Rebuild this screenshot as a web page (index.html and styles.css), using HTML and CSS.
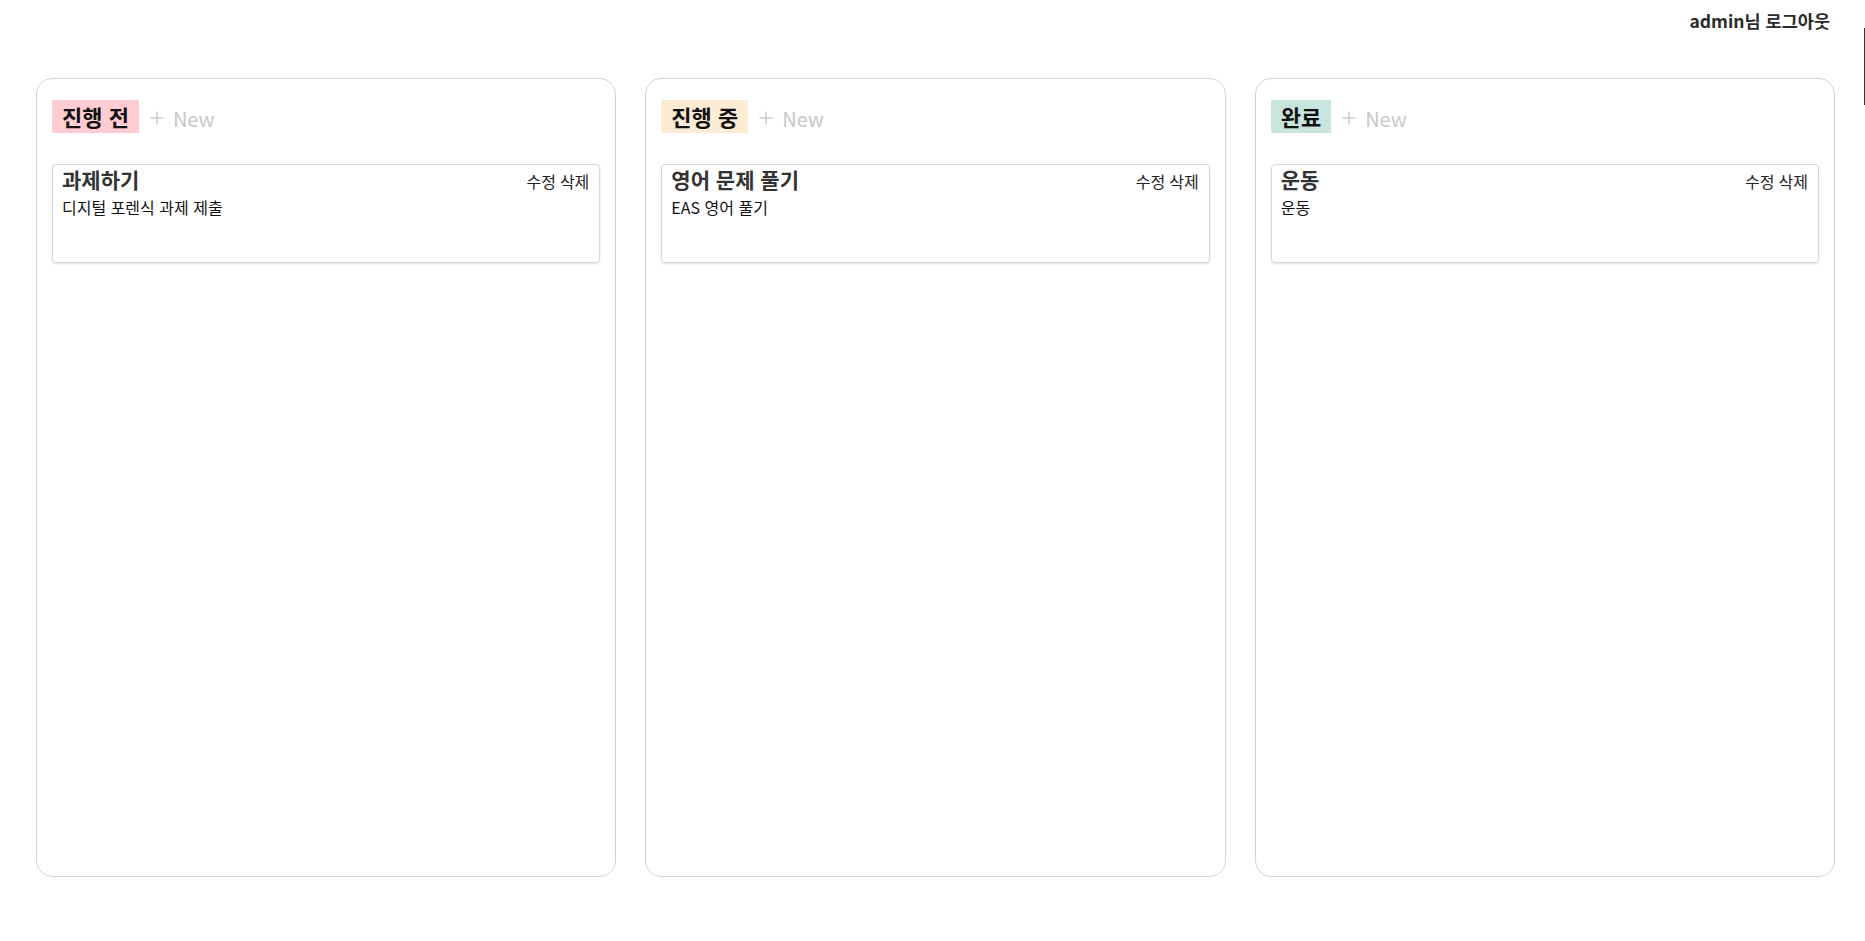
FILE: index.html
```html
<!DOCTYPE html>
<html lang="ko">
<head>
<meta charset="utf-8">
<title>Board</title>
<link rel="stylesheet" href="styles.css">
</head>
<body>
<header class="topbar">
  <span class="user">admin님</span>
  <a class="logout">로그아웃</a>
</header>
<div class="edge-line"></div>
<main class="board">
  <section class="column">
    <div class="column-head">
      <span class="badge badge-todo">진행 전</span>
      <button class="new-btn"><svg class="plus" viewBox="0 0 14 14" width="14" height="14"><path d="M7 0.5V13.5M0.5 7H13.5" stroke="#c8c8c8" stroke-width="1.4" fill="none"/></svg>New</button>
    </div>
    <article class="card">
      <div class="card-top">
        <h3 class="card-title">과제하기</h3>
        <div class="card-actions"><button class="act">수정</button><button class="act">삭제</button></div>
      </div>
      <p class="card-desc">디지털 포렌식 과제 제출</p>
    </article>
  </section>
  <section class="column">
    <div class="column-head">
      <span class="badge badge-doing">진행 중</span>
      <button class="new-btn"><svg class="plus" viewBox="0 0 14 14" width="14" height="14"><path d="M7 0.5V13.5M0.5 7H13.5" stroke="#c8c8c8" stroke-width="1.4" fill="none"/></svg>New</button>
    </div>
    <article class="card">
      <div class="card-top">
        <h3 class="card-title">영어 문제 풀기</h3>
        <div class="card-actions"><button class="act">수정</button><button class="act">삭제</button></div>
      </div>
      <p class="card-desc">EAS 영어 풀기</p>
    </article>
  </section>
  <section class="column">
    <div class="column-head">
      <span class="badge badge-done">완료</span>
      <button class="new-btn"><svg class="plus" viewBox="0 0 14 14" width="14" height="14"><path d="M7 0.5V13.5M0.5 7H13.5" stroke="#c8c8c8" stroke-width="1.4" fill="none"/></svg>New</button>
    </div>
    <article class="card">
      <div class="card-top">
        <h3 class="card-title">운동</h3>
        <div class="card-actions"><button class="act">수정</button><button class="act">삭제</button></div>
      </div>
      <p class="card-desc">운동</p>
    </article>
  </section>
</main>
</body>
</html>
```
FILE: styles.css
```css
* { box-sizing: border-box; }
html, body { margin: 0; padding: 0; background: #fff; }
body {
  font-family: "Noto Sans CJK KR", "Noto Sans", sans-serif;
  color: #111;
  position: relative;
  min-height: 941px;
}
.topbar {
  display: flex;
  justify-content: flex-end;
  gap: 5px;
  padding: 8px 35px 0 0;
  height: 33px;
  font-size: 17.5px;
  line-height: 25px;
  font-weight: 700;
  color: #2b2b2b;
}
.logout { cursor: pointer; }
.edge-line {
  position: absolute;
  right: 0;
  top: 28px;
  width: 1px;
  height: 77px;
  background: #333;
}
.board {
  display: grid;
  grid-template-columns: repeat(3, 1fr);
  column-gap: 29px;
  padding: 45px 30px 0 36px;
}
.column {
  height: 799px;
  border: 1px solid #d3d3d3;
  border-radius: 16px;
  padding: 21px 15px;
}
.column-head {
  display: flex;
  align-items: center;
  height: 33px;
}
.badge {
  display: inline-block;
  height: 33px;
  padding: 0 10px;
  font-size: 22px;
  line-height: 33px;
  font-weight: 700;
  color: #111;
}
.badge-todo { background: #ffccd1; }
.badge-doing { background: #fbecd3; }
.badge-done { background: #c8e5de; }
.new-btn {
  display: inline-flex;
  align-items: center;
  gap: 9px;
  margin-left: 11px;
  margin-top: 3px;
  padding: 0;
  border: 0;
  background: none;
  font-family: inherit;
  font-size: 20px;
  color: #c8c8c8;
  cursor: pointer;
}
.plus { display: block; }
.card {
  margin-top: 31px;
  height: 99px;
  border: 1px solid #d6d6d6;
  border-radius: 4px;
  box-shadow: 0 1px 3px rgba(0, 0, 0, 0.12);
  padding: 0 10px 0 9px;
}
.card-top {
  display: flex;
  justify-content: space-between;
  align-items: baseline;
}
.card-title {
  margin: 0;
  font-size: 21px;
  line-height: 28px;
  font-weight: 700;
  color: #333;
}
.card-actions {
  display: flex;
  gap: 4px;
}
.act {
  border: 0;
  background: none;
  padding: 0;
  font-family: inherit;
  font-size: 16px;
  line-height: 22px;
  color: #222;
  cursor: pointer;
}
.card-desc {
  margin: 2px 0 0;
  font-size: 16px;
  line-height: 24px;
  color: #111;
}
```
